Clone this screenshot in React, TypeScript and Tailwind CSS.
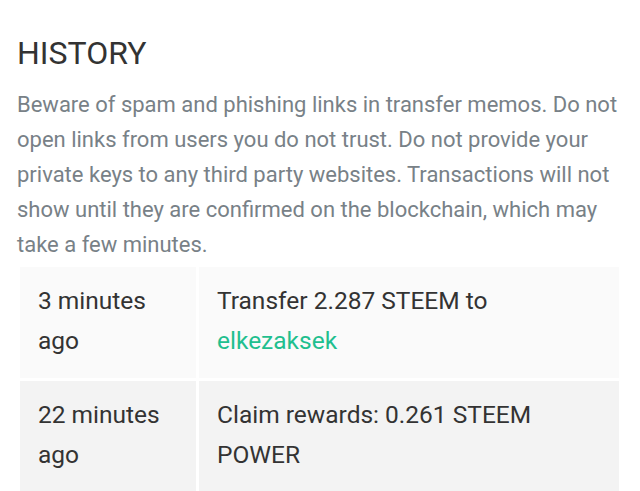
import React from "react";

export default function App() {
  return (
    <div className="w-[640px] h-[491px] overflow-hidden bg-white" style={{ fontFamily: "Roboto, 'Open Sans', sans-serif" }}>
      <div className="pl-[17px] pr-[10px] pt-[34px]">
        <h2 className="text-[32px] leading-[38px] text-[#333333] font-normal">HISTORY</h2>
        <p className="mt-[15px] text-[22px] leading-[35px] text-[#788187]">
          Beware of spam and phishing links in transfer memos. Do not open links from users you do not trust. Do not provide your private keys to any third party websites. Transactions will not show until they are confirmed on the blockchain, which may take a few minutes.
        </p>
      </div>
      <table className="ml-[17px] mt-[2px] w-[605px] border-separate border-spacing-[3px] text-[24.5px] leading-[40px] text-[#333333]">
        <tbody>
          <tr className="bg-[#fafafa]">
            <td className="w-[176px] pl-[18px] pr-[10px] pt-[14px] pb-[17px] align-top">3 minutes ago</td>
            <td className="pl-[18px] pr-[18px] pt-[14px] pb-[17px] align-top">
              Transfer 2.287 STEEM to <span className="text-[#1fbf8f]">elkezaksek</span>
            </td>
          </tr>
          <tr className="bg-[#f3f3f3]">
            <td className="w-[176px] pl-[18px] pr-[10px] pt-[14px] pb-[17px] align-top">22 minutes ago</td>
            <td className="pl-[18px] pr-[18px] pt-[14px] pb-[17px] align-top">Claim rewards: 0.261 STEEM POWER</td>
          </tr>
        </tbody>
      </table>
    </div>
  );
}
